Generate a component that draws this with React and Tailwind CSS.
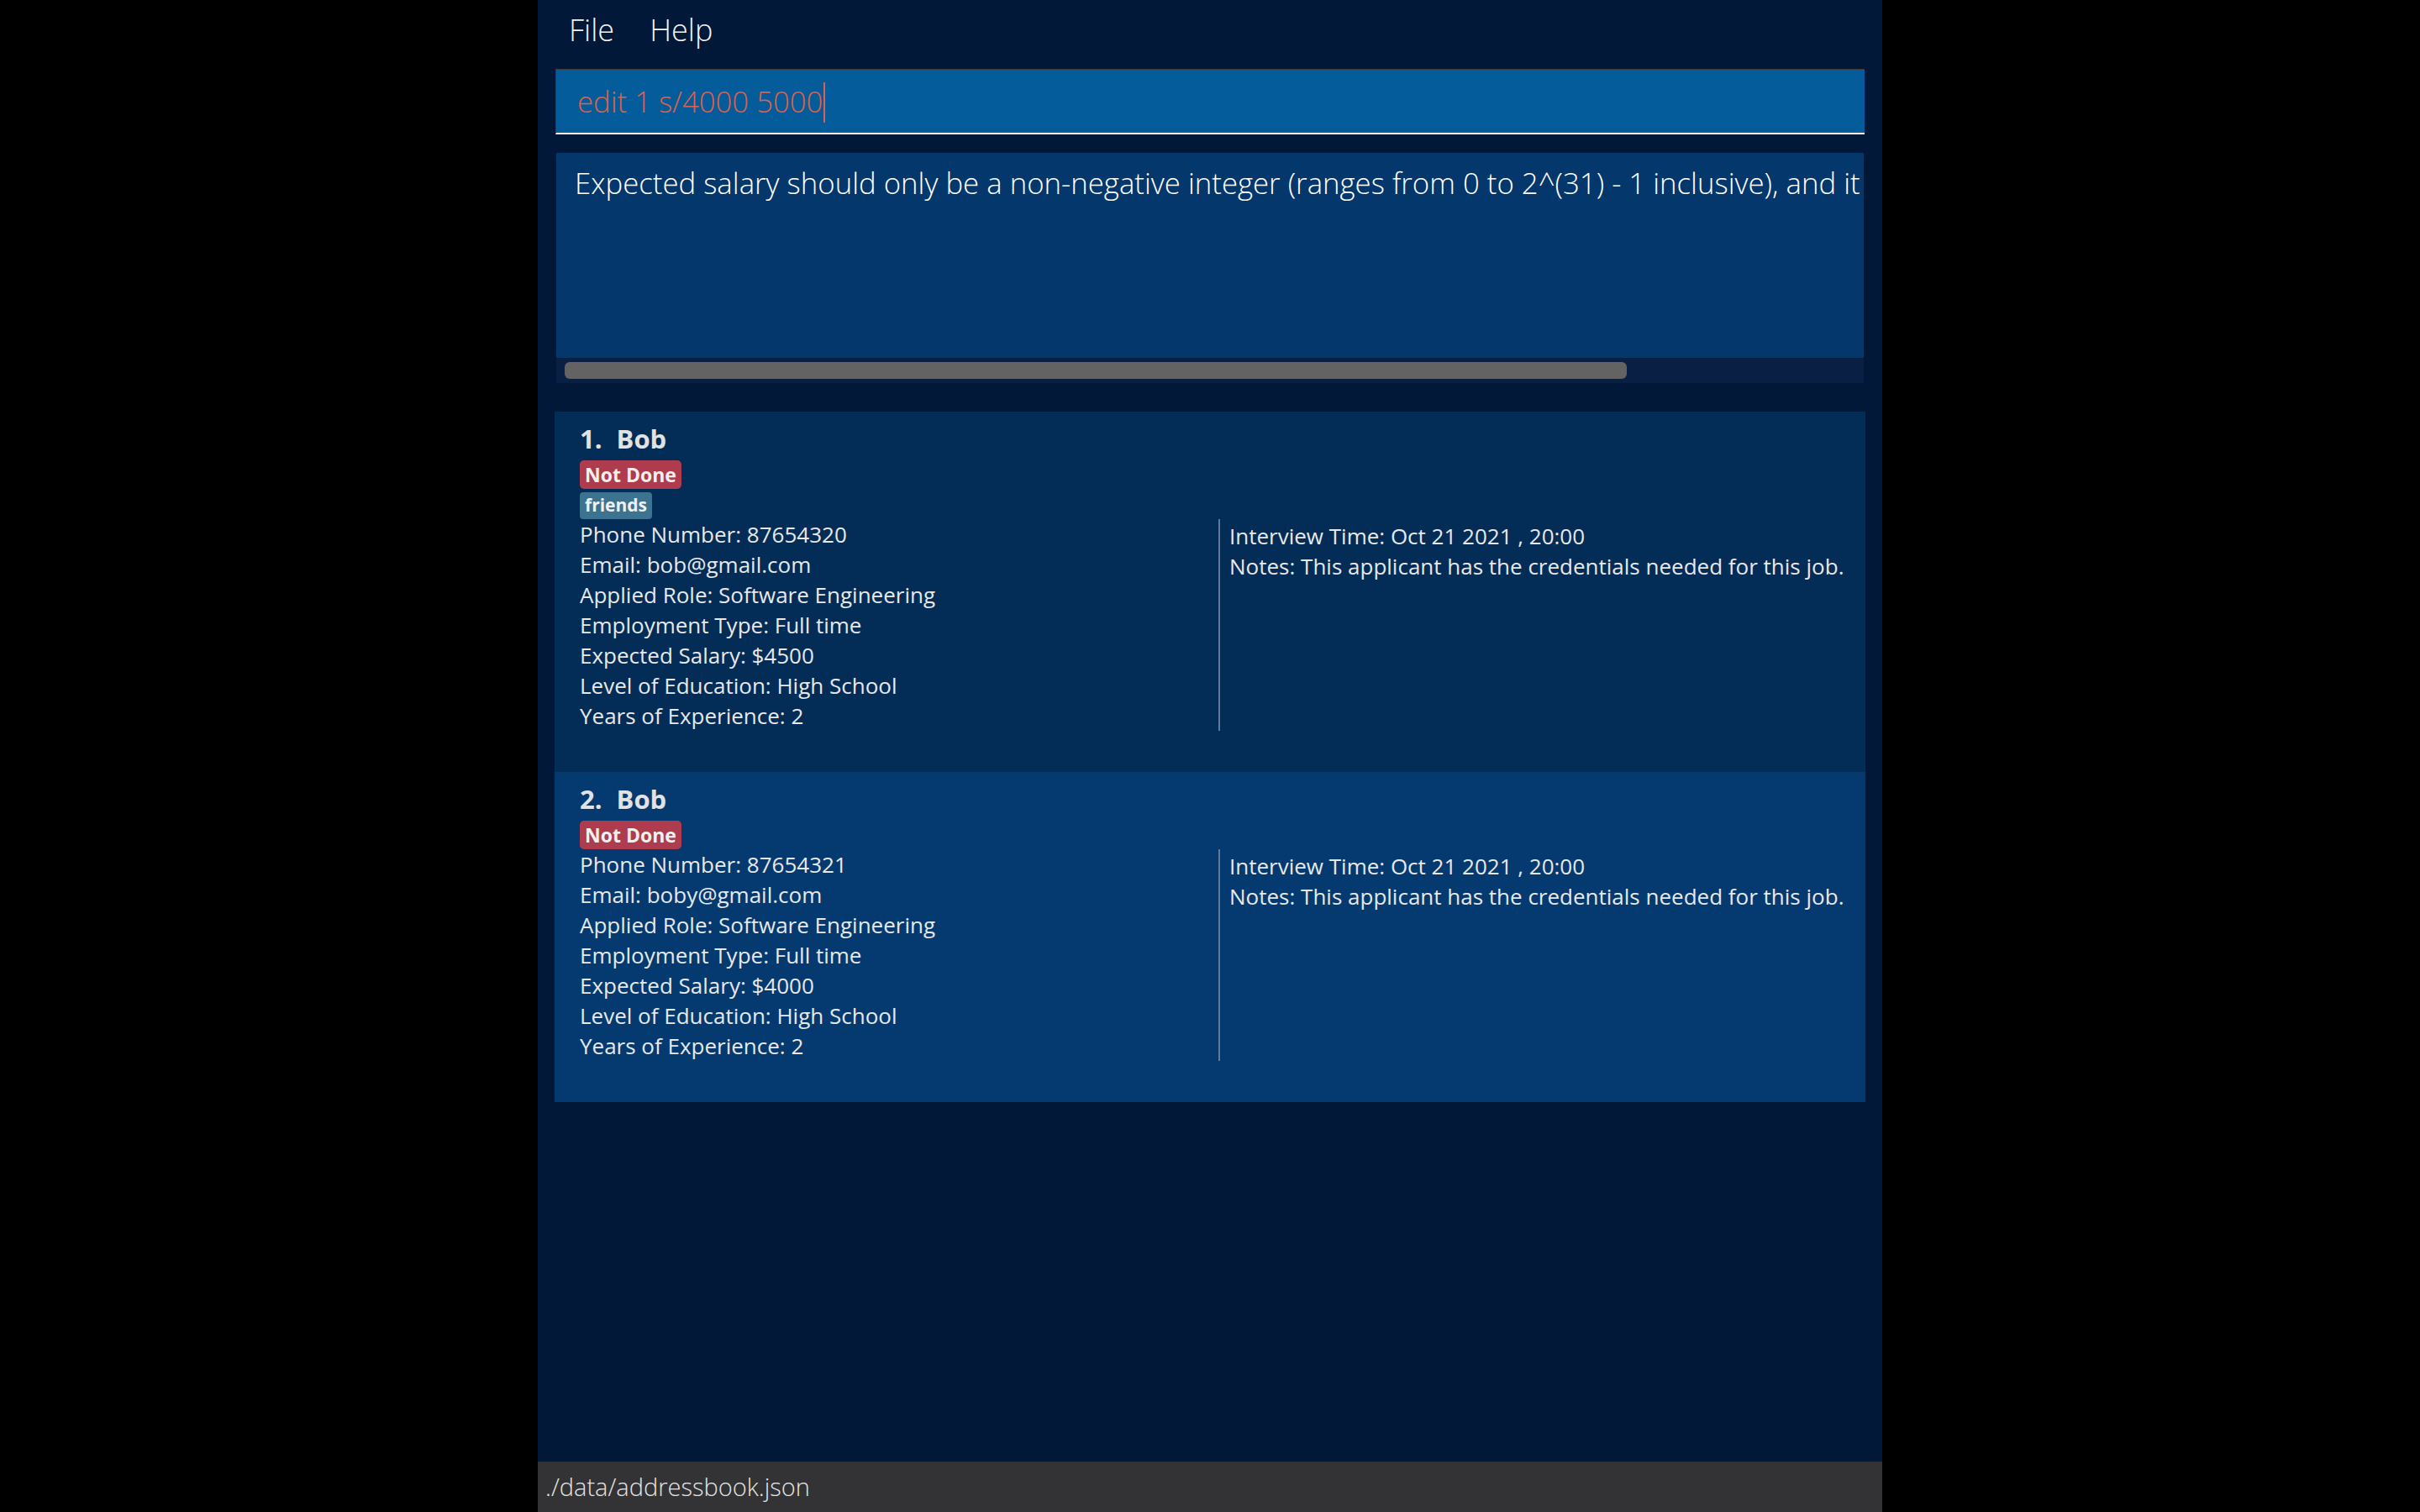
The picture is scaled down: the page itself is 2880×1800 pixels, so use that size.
const CANDIDATES = [
  {
    id: 1,
    name: "Bob",
    status: "Not Done",
    tags: ["friends"],
    phone: "87654320",
    email: "bob@gmail.com",
    role: "Software Engineering",
    type: "Full time",
    salary: "4500",
    education: "High School",
    experience: "2",
    interview: "Oct 21 2021 , 20:00",
    notes: "This applicant has the credentials needed for this job.",
  },
  {
    id: 2,
    name: "Bob",
    status: "Not Done",
    tags: [],
    phone: "87654321",
    email: "boby@gmail.com",
    role: "Software Engineering",
    type: "Full time",
    salary: "4000",
    education: "High School",
    experience: "2",
    interview: "Oct 21 2021 , 20:00",
    notes: "This applicant has the credentials needed for this job.",
  },
];

const FONT = "font-['Open_Sans','Noto_Sans',sans-serif]";

function CandidateCard({ candidate, index }) {
  const rows = [
    `Phone Number: ${candidate.phone}`,
    `Email: ${candidate.email}`,
    `Applied Role: ${candidate.role}`,
    `Employment Type: ${candidate.type}`,
    `Expected Salary: $${candidate.salary}`,
    `Level of Education: ${candidate.education}`,
    `Years of Experience: ${candidate.experience}`,
  ];

  return (
    <div
      className={`pl-[30px] pr-[10px] pt-[10px] pb-[49px] text-[#e8e8e8] ${
        index % 2 === 0 ? "bg-[#032c57]" : "bg-[#043a70]"
      }`}
    >
      {/* Name */}
      <div className="flex h-[44px] items-center gap-[17px] text-[31px] font-bold text-[#e2e2e2]">
        <span>{index + 1}.</span>
        <span>{candidate.name}</span>
      </div>

      {/* Status + tags */}
      <div className="mt-[4px] flex">
        <span className="flex h-[34px] items-center rounded-[5px] bg-[#ae3c4e] px-[6px] text-[23px] font-bold text-[#f0f0f0]">
          {candidate.status}
        </span>
      </div>
      {candidate.tags.map((tag) => (
        <div key={tag} className="mt-[4px] flex">
          <span className="flex h-[32px] items-center rounded-[4px] bg-[#3b7390] px-[6px] text-[21px] font-bold text-[#f0f0f0]">
            {tag}
          </span>
        </div>
      ))}

      {/* Details */}
      <div className="flex text-[26px] leading-[36px]">
        <div className="w-[760px] shrink-0">
          {rows.map((r) => (
            <div key={r}>{r}</div>
          ))}
        </div>
        <div className="flex-1 whitespace-nowrap border-l-2 border-[#62799a] pl-[11px] pt-[2px]">
          <div>Interview Time: {candidate.interview}</div>
          <div>Notes: {candidate.notes}</div>
        </div>
      </div>
    </div>
  );
}

export default function App() {
  return (
    <div className={`flex h-[1800px] w-[2880px] justify-center bg-black ${FONT}`}>
      <div className="flex w-[1600px] flex-col bg-[#021838]">
        {/* Menu bar */}
        <div className="flex h-[72px] shrink-0 items-center gap-[42px] pl-[37px] text-[36px] font-light text-[#f2f2f2]">
          <span>File</span>
          <span>Help</span>
        </div>

        {/* Command box */}
        <div className="mx-[21px] mt-[10px] flex h-[78px] shrink-0 items-center border-l border-t border-[#3c3c3c] border-b-2 border-b-white bg-[#045d9a] pl-[25px] pt-[2px]">
          <span className="text-[34.7px] font-light text-[#dc614e]">edit 1 s/4000 5000</span>
          <span className="ml-[1px] h-[48px] w-[2px] bg-[#dc614e]" />
        </div>

        {/* Result display */}
        <div className="mx-[22px] mt-[22px] flex h-[274px] shrink-0 flex-col bg-[#0a1f44]">
          <div className="h-[244px] overflow-hidden bg-[#04376b] pl-[22px] pt-[10px]">
            <p className="whitespace-nowrap text-[34.75px] font-light text-white">
              Expected salary should only be a non-negative integer (ranges from 0 to 2^(31) - 1 inclusive), and it should not be blank
            </p>
          </div>
          <div className="flex h-[30px] items-center px-[10px]">
            <div className="h-[20px] w-[1264px] rounded-[6px] bg-[#636363]" />
          </div>
        </div>

        {/* Candidate list */}
        <div className="mx-[20px] mt-[34px] flex flex-1 flex-col">
          {CANDIDATES.map((c, i) => (
            <CandidateCard key={c.id} candidate={c} index={i} />
          ))}
        </div>

        {/* Status bar */}
        <div className="flex h-[60px] shrink-0 items-center bg-[#333335] pl-[9px] text-[29px] font-light text-[#e4e4e4]">
          ./data/addressbook.json
        </div>
      </div>
    </div>
  );
}
